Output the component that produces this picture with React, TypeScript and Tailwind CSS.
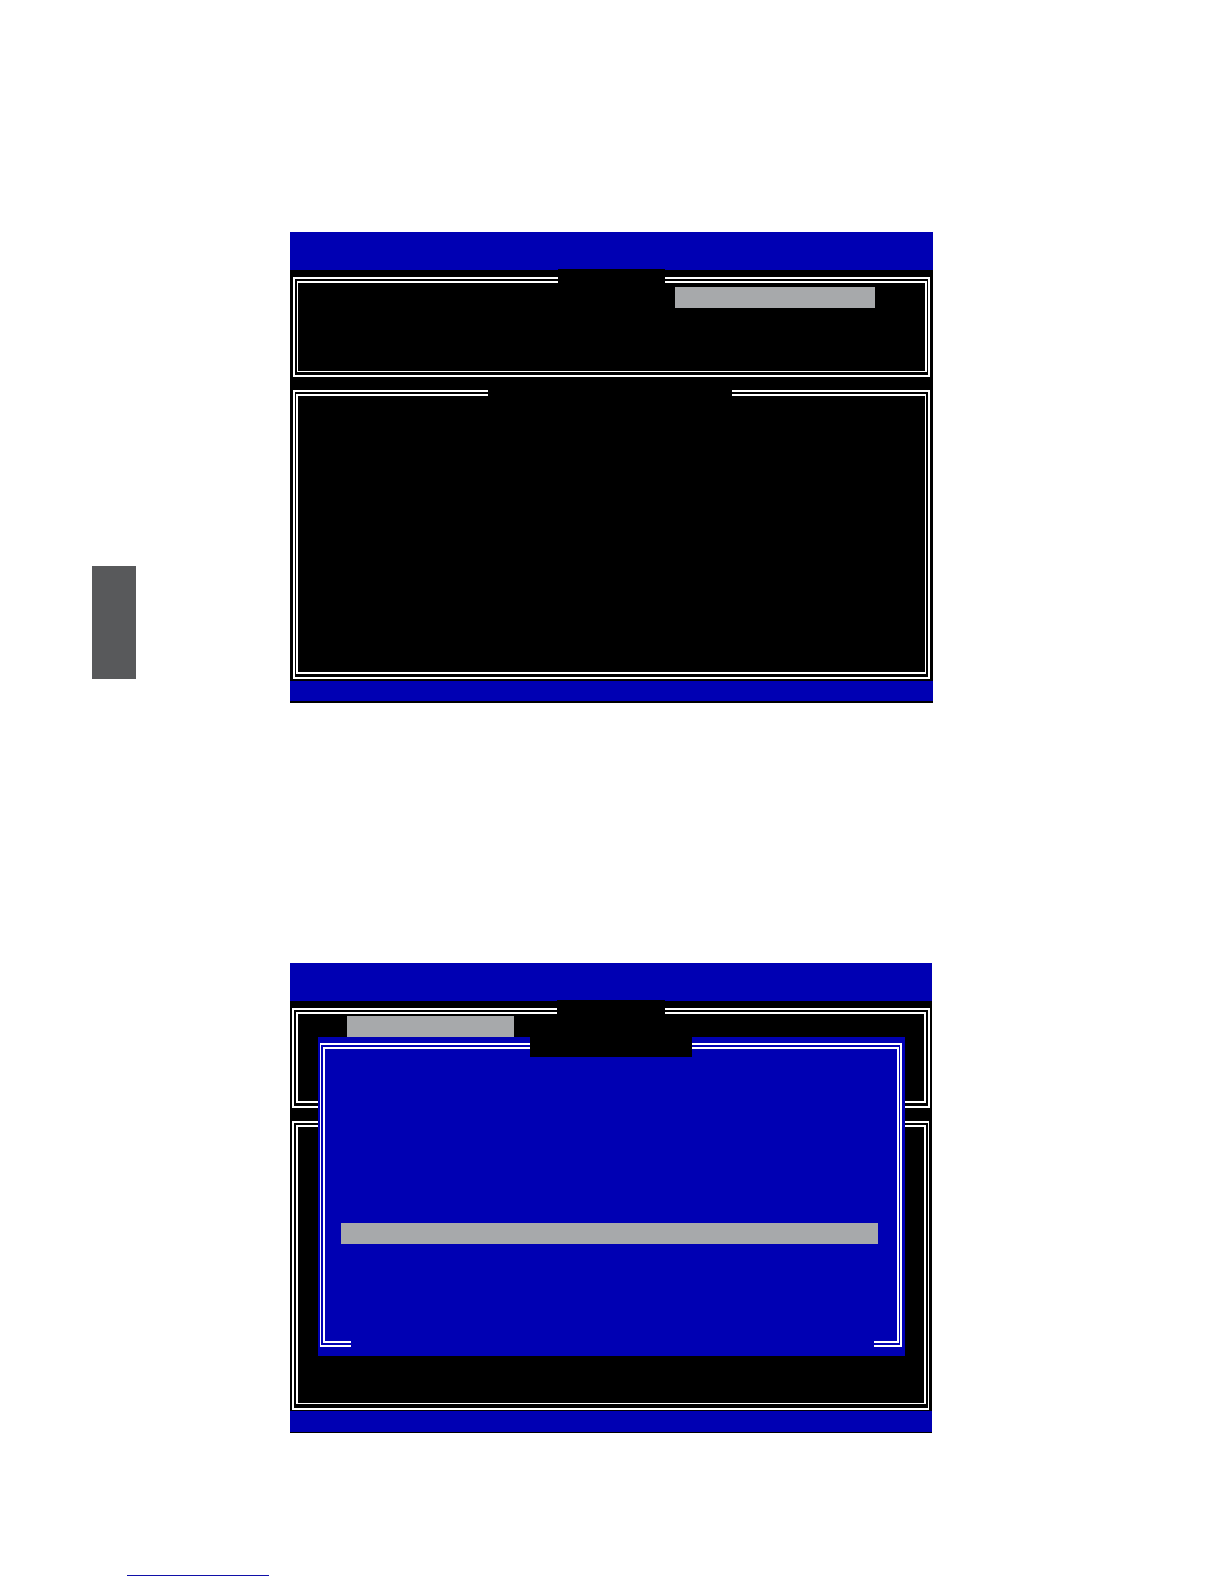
import type { ReactNode } from "react";

type FrameProps = {
  outer: string;
  inner: string;
  children?: ReactNode;
};

function DoubleFrame({ outer, inner, children }: FrameProps) {
  return (
    <div className={`flex border-white ${outer}`}>
      <div className={`min-w-0 flex-1 border-white ${inner}`}>{children}</div>
    </div>
  );
}

function TitleBar() {
  return <header className="h-[38px] shrink-0 bg-[#0000b3]" />;
}

function OptionsScreen() {
  return (
    <section aria-label="Options" className="flex h-[471px] flex-col bg-black">
      <TitleBar />
      <div className="relative mx-[3px] mt-[7px]">
        <DoubleFrame
          outer="h-[100px] border-2 pt-[2px] pr-px pb-[3px] pl-[2px]"
          inner="flex items-start justify-end border-t-2 border-r-2 border-b border-l pt-1 pr-[50px]"
        >
          <button type="button" aria-label="Selected option" className="h-[21px] w-[200px] bg-[#a7a9ab]" />
        </DoubleFrame>
        <h2 className="absolute -top-2 right-[265px] left-[265px] h-5 bg-black" />
      </div>
      <div className="relative mx-[3px] mt-[13px]">
        <DoubleFrame
          outer="h-[289px] border-2 pt-[2px] pr-[2px] pb-[3px] pl-px"
          inner="border-t-2 border-r border-b-2 border-l-2"
        />
        <h2 className="absolute -top-1 right-[198px] left-[195px] h-5 bg-black" />
      </div>
      <footer className="mt-[2px] h-5 bg-[#0000b3]" />
    </section>
  );
}

function MenuDialog() {
  return (
    <div
      role="dialog"
      aria-label="Menu"
      className="absolute top-[74px] right-[27px] bottom-[77px] left-[28px] flex flex-col bg-[#0000b3] pt-[6px] pr-[3px] pb-[9px] pl-[2px]"
    >
      <DoubleFrame
        outer="flex-1 border-t-2 border-r-2 border-b-2 border-l pt-[2px] pr-px pb-[2px] pl-[2px]"
        inner="flex items-start border-2 pt-[174px] pr-[19px] pl-4"
      >
        <button type="button" aria-label="Selected item" className="h-[21px] flex-1 bg-[#a7a9ab]" />
      </DoubleFrame>
      <h3 className="absolute top-0 right-[213px] left-[212px] h-5 bg-black" />
      <p className="absolute right-[31px] bottom-[7px] left-[33px] h-5 bg-[#0000b3]" />
    </div>
  );
}

function DialogScreen() {
  return (
    <section aria-label="Menu" className="relative mr-px flex h-[470px] flex-col bg-black">
      <TitleBar />
      <div className="relative mx-[2px] mt-[7px]">
        <DoubleFrame
          outer="h-[100px] border-2 pt-[2px] pr-[2px] pb-[3px] pl-[2px]"
          inner="flex items-start border-2 pt-[2px] pl-[49px]"
        >
          <button type="button" aria-label="Selected option" className="h-[21px] w-[167px] bg-[#a7a9ab]" />
        </DoubleFrame>
        <h2 className="absolute -top-2 right-[265px] left-[265px] h-5 bg-black" />
      </div>
      <DoubleFrame
        outer="mt-[13px] mr-[3px] ml-[2px] h-[289px] border-t-2 border-r border-b-2 border-l-2 pt-[2px] pr-[2px] pb-1 pl-[2px]"
        inner="border-t-2 border-r-2 border-b border-l-2"
      />
      <footer className="mt-px h-[21px] bg-[#0000b3]" />
      <MenuDialog />
    </section>
  );
}

export default function App() {
  return (
    <div className="flex min-h-screen flex-col bg-white">
      <div className="flex flex-1">
        <aside className="w-[136px] shrink-0 pt-[566px] pl-[92px]">
          <div className="h-[113px] bg-[#58595b]" />
        </aside>
        <main className="mr-[291px] ml-[154px] flex min-w-0 flex-1 flex-col gap-[260px] pt-[232px]">
          <OptionsScreen />
          <DialogScreen />
        </main>
      </div>
      <footer className="pb-2 pl-[127px]">
        <a href="#top" aria-label="Back to top" className="block h-4 w-[142px] border-b border-b-[#1010a8]" />
      </footer>
    </div>
  );
}
